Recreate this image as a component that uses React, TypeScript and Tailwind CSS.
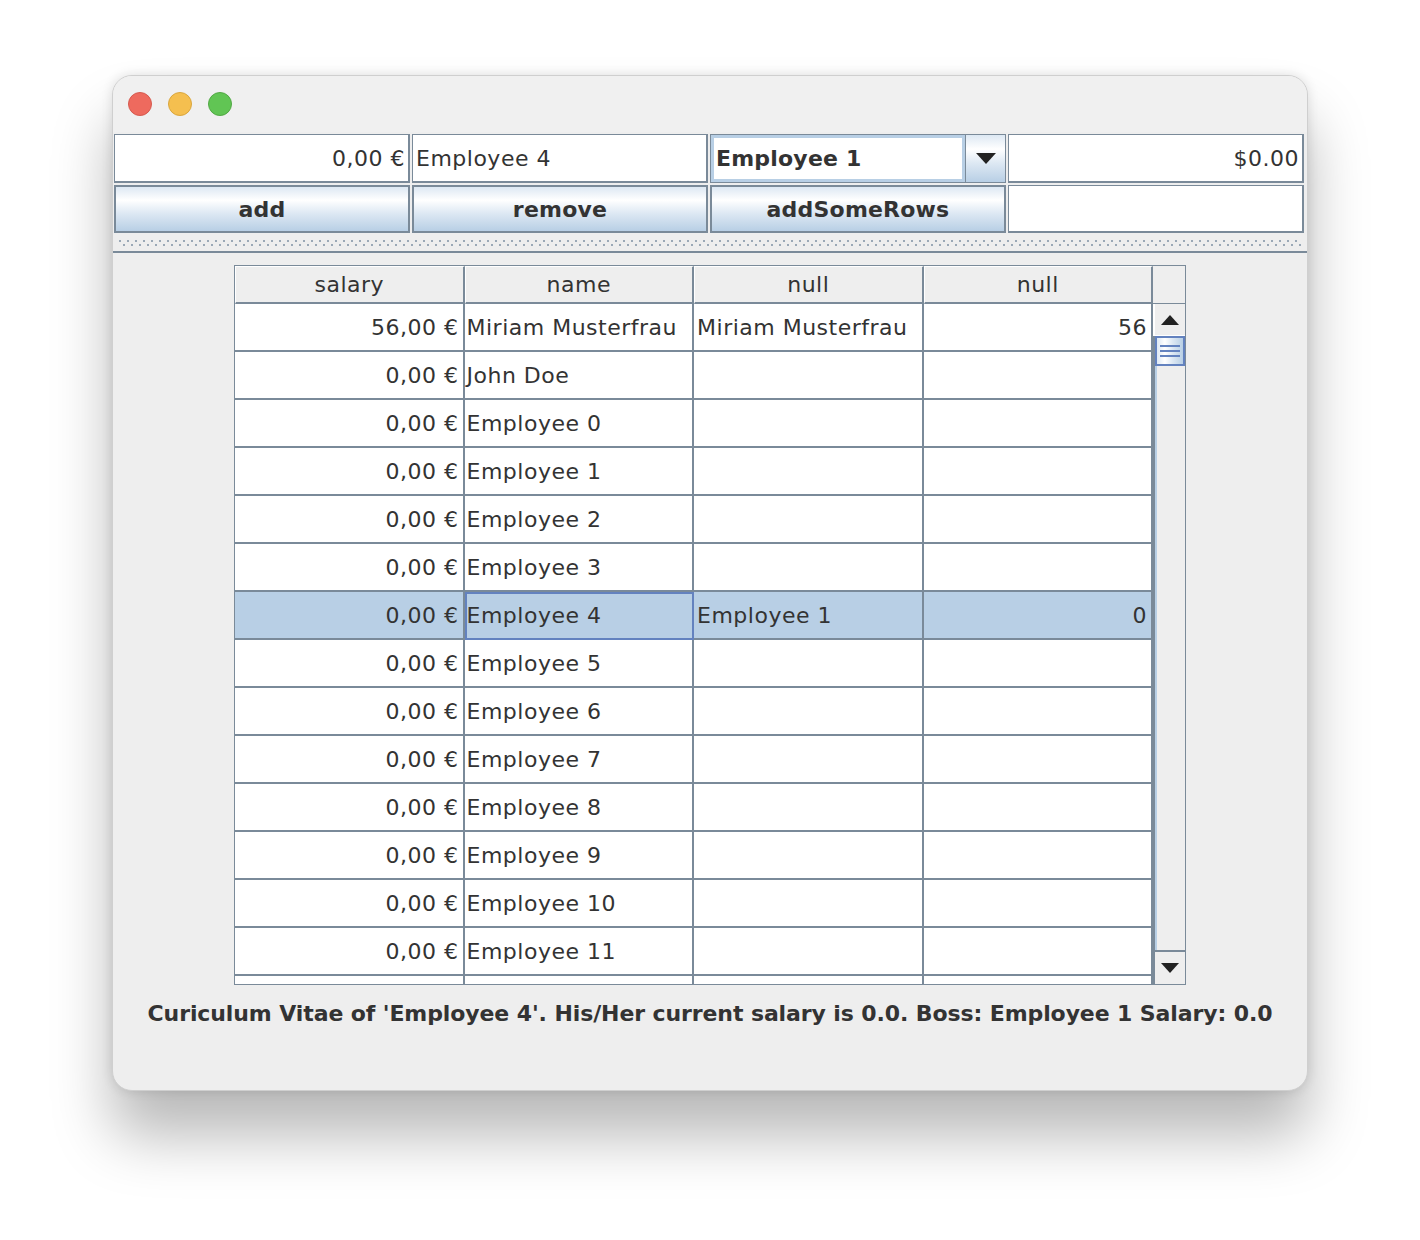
import React from "react";

const FONT = "font-['DejaVu_Sans',sans-serif]";

const rows: { salary: string; name: string; boss: string; num: string }[] = [
  { salary: "56,00 €", name: "Miriam Musterfrau", boss: "Miriam Musterfrau", num: "56" },
  { salary: "0,00 €", name: "John Doe", boss: "", num: "" },
  ...Array.from({ length: 12 }, (_, i) => ({
    salary: "0,00 €",
    name: `Employee ${i}`,
    boss: i === 4 ? "Employee 1" : "",
    num: i === 4 ? "0" : "",
  })),
  { salary: "", name: "", boss: "", num: "" },
];

const SELECTED = 6;

const TextField = ({ value, right }: { value?: string; right?: boolean }) => (
  <div
    className={`h-full bg-white border-t border-l border-b-2 border-r-2 border-[#7a8a99] flex items-center px-[3px] text-[#333] ${
      right ? "justify-end" : "justify-start"
    }`}
  >
    <span className="whitespace-nowrap">{value}</span>
  </div>
);

const MetalButton = ({ label }: { label: string }) => (
  <div className="h-full border-2 border-[#7a8a99] bg-[linear-gradient(180deg,#dde8f3_0%,#ffffff_30%,#dde8f3_60%,#b8cfe5_100%)] flex items-center justify-center font-bold text-[#333] tracking-[0.2px]">
    {label}
  </div>
);

const Arrow = ({ up }: { up?: boolean }) => (
  <svg width="18" height="10" viewBox="0 0 18 10">
    <path d={up ? "M0 10 L9 0 L18 10 Z" : "M0 0 L18 0 L9 10 Z"} fill="#222" />
  </svg>
);

const App = () => {
  return (
    <div className={`min-h-screen bg-white pt-[75px] ${FONT} text-[22px] tracking-[0.5px]`}>
      <div className="w-[1196px] h-[1016px] mx-auto rounded-[20px] bg-[#eeeeee] border border-[#cfcfcf] overflow-hidden flex flex-col shadow-[0_45px_60px_rgba(0,0,0,0.28),0_0_12px_rgba(0,0,0,0.12)]">
        {/* title bar */}
        <div className="h-[56px] shrink-0 bg-[#f0f0f0] flex items-center gap-[16px] pl-[15px]">
          <span className="w-[24px] h-[24px] rounded-full bg-[#ee6a5e] border border-[#d55a4f]" />
          <span className="w-[24px] h-[24px] rounded-full bg-[#f5bf4f] border border-[#d9a63e]" />
          <span className="w-[24px] h-[24px] rounded-full bg-[#61c554] border border-[#52a845]" />
        </div>

        {/* top panel */}
        <div className="grid grid-cols-4 grid-rows-[49px_48px] gap-x-[2px] gap-y-[2px] pl-[1px] pr-[3px] pt-[2px]">
          <TextField value="0,00 €" right />
          <TextField value="Employee 4" />
          <div className="h-full flex border border-[#7a8a99]">
            <div className="flex-1 bg-white border-[3px] border-[#b8cfe5] flex items-center px-[2px] font-bold text-[#333] tracking-[0.2px]">
              Employee 1
            </div>
            <div className="w-[40px] border-l border-[#7a8a99] bg-[linear-gradient(180deg,#dde8f3_0%,#ffffff_30%,#dde8f3_60%,#b8cfe5_100%)] flex items-center justify-center">
              <svg width="20" height="11" viewBox="0 0 20 11">
                <path d="M0 0 L20 0 L10 11 Z" fill="#222" />
              </svg>
            </div>
          </div>
          <TextField value="$0.00" right />
          <MetalButton label="add" />
          <MetalButton label="remove" />
          <MetalButton label="addSomeRows" />
          <TextField />
        </div>

        {/* split divider */}
        <div className="h-[19px] shrink-0 flex flex-col justify-center gap-[2px] border-b-2 border-[#7a8a99] mt-[1px] px-[6px]">
          <div className="h-[2px] bg-[repeating-linear-gradient(90deg,#9aa8b6_0_2px,transparent_2px_8px)]" />
          <div className="h-[2px] ml-[4px] bg-[repeating-linear-gradient(90deg,#9aa8b6_0_2px,transparent_2px_8px)]" />
        </div>

        {/* table */}
        <div className="flex-1 flex flex-col items-center pt-[12px]">
          <div className="w-[952px] h-[720px] border border-[#7a8a99] flex bg-white overflow-hidden">
            <div className="w-[920px] flex flex-col">
              <div className="h-[38px] shrink-0 grid grid-cols-4 bg-[#eeeeee]">
                {["salary", "name", "null", "null"].map((h, i) => (
                  <div
                    key={i}
                    className="border-t border-l border-white border-r-2 border-b-2 border-r-[#7a8a99] border-b-[#7a8a99] flex items-center justify-center text-[#333]"
                  >
                    {h}
                  </div>
                ))}
              </div>
              <div className="flex-1 overflow-hidden">
                {rows.map((r, i) => {
                  const sel = i === SELECTED;
                  return (
                    <div
                      key={i}
                      className={`h-[48px] grid grid-cols-4 text-[#333] ${sel ? "bg-[#b8cfe5]" : "bg-white"}`}
                    >
                      <div className="border-r-2 border-b-2 border-[#7a8a99] flex items-center justify-end pr-[4px] whitespace-nowrap">
                        {r.salary}
                      </div>
                      <div
                        className={`border-b-2 border-r-2 border-[#7a8a99] flex items-center pl-[2px] whitespace-nowrap ${
                          sel ? "outline-2 -outline-offset-2 outline-[#6382bf]" : ""
                        }`}
                      >
                        {r.name}
                      </div>
                      <div className="border-r-2 border-b-2 border-[#7a8a99] flex items-center pl-[3px] whitespace-nowrap">
                        {r.boss}
                      </div>
                      <div className="border-r-2 border-b-2 border-[#7a8a99] flex items-center justify-end pr-[4px]">
                        {r.num}
                      </div>
                    </div>
                  );
                })}
              </div>
            </div>

            {/* scrollbar */}
            <div className="w-[32px] flex flex-col bg-[#eeeeee]">
              <div className="h-[38px] shrink-0 bg-[#eeeeee] border-b border-[#7a8a99]" />
              <div className="h-[32px] shrink-0 border-l-2 border-[#7a8a99] bg-[#eeeeee] flex items-center justify-center border-b border-white">
                <Arrow up />
              </div>
              <div className="flex-1 flex flex-col border-l-2 border-[#7a8a99]">
                <div className="h-[30px] border-2 border-[#6382bf] bg-[linear-gradient(90deg,#dde8f3_0%,#ffffff_30%,#dde8f3_60%,#b8cfe5_100%)] flex flex-col items-center justify-center gap-[3px]">
                  <span className="w-[20px] h-[2px] bg-[#6382bf]" />
                  <span className="w-[20px] h-[2px] bg-[#6382bf]" />
                  <span className="w-[20px] h-[2px] bg-[#6382bf]" />
                </div>
                <div className="flex-1 border-l-2 border-[#b8cfe5]" />
              </div>
              <div className="h-[34px] shrink-0 border-l-2 border-t-2 border-[#7a8a99] bg-[#eeeeee] flex items-center justify-center">
                <Arrow />
              </div>
            </div>
          </div>

          <div className="mt-[12px] font-bold text-[#333] text-[22px] tracking-[-0.1px] whitespace-nowrap">
            Curiculum Vitae of 'Employee 4'. His/Her current salary is 0.0. Boss: Employee 1 Salary: 0.0
          </div>
        </div>
      </div>
    </div>
  );
};

export default App;
